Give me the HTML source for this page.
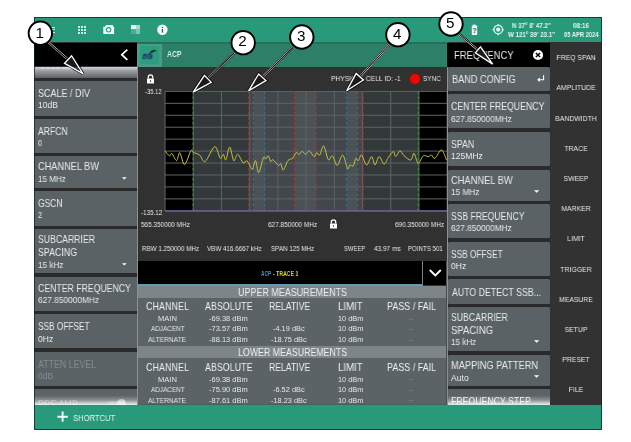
<!DOCTYPE html>
<html><head><meta charset="utf-8">
<style>
*{box-sizing:border-box;margin:0;padding:0}
html,body{width:631px;height:442px;overflow:hidden;background:#fff}
body{position:relative;font-family:"Liberation Sans",sans-serif;color:#e8eaea}
.a{position:absolute}
.t{position:absolute;white-space:nowrap;line-height:1;will-change:transform}
</style></head><body>
<div class="a" style="left:34.00px;top:17.00px;width:568.00px;height:412.50px;background:#313131;"></div>
<div class="a" style="left:34.00px;top:17.00px;width:568.00px;height:25.30px;background:#29997c;"></div>
<div class="a" style="left:34.00px;top:42.50px;width:103.00px;height:24.50px;background:#000;"></div>
<div class="a" style="left:34.00px;top:67.00px;width:103.00px;height:338.00px;background:#2a2a2a;"></div>
<div class="a" style="left:34.00px;top:67.00px;width:103.00px;height:10.50px;background:linear-gradient(#d3d5d6,#9a9ea0 35%,#5b6266);"></div>
<div class="a" style="left:34.00px;top:80.80px;width:103.00px;height:34.90px;background:#5b6266;"></div>
<div class="a" style="left:34.00px;top:119.40px;width:103.00px;height:33.70px;background:#5b6266;"></div>
<div class="a" style="left:34.00px;top:156.20px;width:103.00px;height:31.70px;background:#5b6266;"></div>
<div class="a" style="left:34.00px;top:191.00px;width:103.00px;height:34.50px;background:#5b6266;"></div>
<div class="a" style="left:34.00px;top:228.70px;width:103.00px;height:44.30px;background:#5b6266;"></div>
<div class="a" style="left:34.00px;top:276.50px;width:103.00px;height:34.60px;background:#5b6266;"></div>
<div class="a" style="left:34.00px;top:314.20px;width:103.00px;height:34.20px;background:#5b6266;"></div>
<div class="a" style="left:34.00px;top:351.80px;width:103.00px;height:34.40px;background:#5b6266;"></div>
<div class="a" style="left:34.00px;top:389.20px;width:103.00px;height:15.80px;background:linear-gradient(#5b6266,#5e6569 42%,#8d9194 70%,#f2f2f2);"></div>
<div class="a" style="left:137.00px;top:67.00px;width:1.20px;height:338.00px;background:#8c9194;"></div>
<div class="t" style="left:38.00px;top:89.11px;font-size:10.29px;color:#e8eaea;transform:scaleX(0.876);transform-origin:0 0;font-weight:normal;">SCALE / DIV</div>
<div class="t" style="left:38.00px;top:101.13px;font-size:8.55px;color:#e8eaea;transform:scaleX(0.992);transform-origin:0 0;font-weight:normal;">10dB</div>
<div class="t" style="left:38.00px;top:126.61px;font-size:10.29px;color:#e8eaea;transform:scaleX(0.838);transform-origin:0 0;font-weight:normal;">ARFCN</div>
<div class="t" style="left:38.00px;top:138.63px;font-size:8.55px;color:#e8eaea;transform:scaleX(0.864);transform-origin:0 0;font-weight:normal;">0</div>
<div class="t" style="left:38.00px;top:162.01px;font-size:10.29px;color:#e8eaea;transform:scaleX(0.894);transform-origin:0 0;font-weight:normal;">CHANNEL BW</div>
<div class="t" style="left:38.00px;top:174.83px;font-size:8.55px;color:#e8eaea;transform:scaleX(0.940);transform-origin:0 0;font-weight:normal;">15 MHz</div>
<svg class="a" style="left:121.8px;top:177.00px" width="6" height="4" viewBox="0 0 6 4"><path d="M0 0.3H4.6L2.3 2.6Z" fill="#fff"/></svg>
<div class="t" style="left:38.00px;top:199.11px;font-size:10.29px;color:#e8eaea;transform:scaleX(0.824);transform-origin:0 0;font-weight:normal;">GSCN</div>
<div class="t" style="left:38.00px;top:211.13px;font-size:8.55px;color:#e8eaea;transform:scaleX(0.864);transform-origin:0 0;font-weight:normal;">2</div>
<div class="t" style="left:38.00px;top:234.81px;font-size:10.29px;color:#e8eaea;transform:scaleX(0.845);transform-origin:0 0;font-weight:normal;">SUBCARRIER</div>
<div class="t" style="left:38.00px;top:247.51px;font-size:10.29px;color:#e8eaea;transform:scaleX(0.859);transform-origin:0 0;font-weight:normal;">SPACING</div>
<div class="t" style="left:38.00px;top:260.63px;font-size:8.55px;color:#e8eaea;transform:scaleX(0.951);transform-origin:0 0;font-weight:normal;">15 kHz</div>
<svg class="a" style="left:121.8px;top:262.80px" width="6" height="4" viewBox="0 0 6 4"><path d="M0 0.3H4.6L2.3 2.6Z" fill="#fff"/></svg>
<div class="t" style="left:38.00px;top:284.41px;font-size:10.29px;color:#e8eaea;transform:scaleX(0.847);transform-origin:0 0;font-weight:normal;">CENTER FREQUENCY</div>
<div class="t" style="left:38.00px;top:296.43px;font-size:8.55px;color:#e8eaea;transform:scaleX(0.972);transform-origin:0 0;font-weight:normal;">627.850000MHz</div>
<div class="t" style="left:38.00px;top:321.61px;font-size:10.29px;color:#e8eaea;transform:scaleX(0.806);transform-origin:0 0;font-weight:normal;">SSB OFFSET</div>
<div class="t" style="left:38.00px;top:334.53px;font-size:8.55px;color:#e8eaea;transform:scaleX(0.986);transform-origin:0 0;font-weight:normal;">0Hz</div>
<div class="t" style="left:38.00px;top:359.51px;font-size:10.29px;color:#858b8e;transform:scaleX(0.858);transform-origin:0 0;font-weight:normal;">ATTEN LEVEL</div>
<div class="t" style="left:38.00px;top:372.23px;font-size:8.55px;color:#858b8e;transform:scaleX(1.005);transform-origin:0 0;font-weight:normal;">0dB</div>
<div class="a" style="left:46.00px;top:26.60px;width:9.00px;height:1.30px;background:#c9f2e4;"></div>
<div class="a" style="left:46.00px;top:29.20px;width:9.00px;height:1.30px;background:#c9f2e4;"></div>
<div class="a" style="left:46.00px;top:31.80px;width:9.00px;height:1.30px;background:#c9f2e4;"></div>
<div class="a" style="left:77.60px;top:25.80px;width:2.20px;height:2.20px;background:#c9f2e4;"></div>
<div class="a" style="left:77.60px;top:28.75px;width:2.20px;height:2.20px;background:#c9f2e4;"></div>
<div class="a" style="left:77.60px;top:31.70px;width:2.20px;height:2.20px;background:#c9f2e4;"></div>
<div class="a" style="left:80.65px;top:25.80px;width:2.20px;height:2.20px;background:#c9f2e4;"></div>
<div class="a" style="left:80.65px;top:28.75px;width:2.20px;height:2.20px;background:#c9f2e4;"></div>
<div class="a" style="left:80.65px;top:31.70px;width:2.20px;height:2.20px;background:#c9f2e4;"></div>
<div class="a" style="left:83.70px;top:25.80px;width:2.20px;height:2.20px;background:#c9f2e4;"></div>
<div class="a" style="left:83.70px;top:28.75px;width:2.20px;height:2.20px;background:#c9f2e4;"></div>
<div class="a" style="left:83.70px;top:31.70px;width:2.20px;height:2.20px;background:#c9f2e4;"></div>
<svg class="a" style="left:102px;top:23px" width="14" height="13" viewBox="0 0 14 13"><path d="M4 1.9 L10.8 1.9 L11.4 3.7 L12.1 3.7 L12.1 11.1 L1.3 11.1 L1.3 3.7 L3.3 3.7 Z" fill="#f2fbf8"/><circle cx="6.6" cy="6.8" r="2.2" fill="none" stroke="#2b9a7b" stroke-width="1.1"/></svg>
<div class="a" style="left:130.90px;top:25.20px;width:4.70px;height:4.10px;background:#e8f8f2;"></div>
<div class="a" style="left:135.60px;top:25.20px;width:4.40px;height:4.10px;background:#a8dcc9;"></div>
<div class="a" style="left:130.90px;top:29.30px;width:4.70px;height:4.50px;background:#4fae90;"></div>
<div class="a" style="left:135.60px;top:29.30px;width:4.40px;height:4.50px;background:#7cc7ae;"></div>
<svg class="a" style="left:156px;top:23px" width="13" height="13" viewBox="0 0 13 13"><circle cx="6.4" cy="6.7" r="5.2" fill="#f4fcf9"/><rect x="5.8" y="6" width="1.3" height="3.6" fill="#1f5f4d"/><circle cx="6.45" cy="4.4" r="0.75" fill="#1f5f4d"/></svg>
<svg class="a" style="left:470px;top:23px" width="9" height="13" viewBox="0 0 9 13"><path d="M3.2 1.4 H5.4 V2.6 H7.2 V12.1 H1.8 V2.6 H3.2 Z" fill="#e8f8f2"/><text x="4.5" y="10.2" font-size="7.4" text-anchor="middle" fill="#1f6a55" style="font-family:Liberation Sans" font-weight="bold">?</text></svg>
<svg class="a" style="left:491px;top:23px" width="15" height="14" viewBox="0 0 15 14"><circle cx="7.2" cy="6.6" r="4.3" fill="none" stroke="#d8f6ea" stroke-width="1.3"/><circle cx="7.2" cy="6.6" r="2.1" fill="#e8f8f2"/><path d="M7.2 0.9V2.6M7.2 10.6V12.3M1.5 6.6H3.2M11.2 6.6H12.9" stroke="#d8f6ea" stroke-width="1.2"/></svg>
<div class="t" style="left:511.70px;top:21.64px;font-size:7.25px;color:#e6f5ef;transform:scaleX(0.853);transform-origin:0 0;font-weight:bold;">N 37° 8' 47.2"</div>
<div class="t" style="left:507.50px;top:30.90px;font-size:7.54px;color:#e6f5ef;transform:scaleX(0.821);transform-origin:0 0;font-weight:bold;">W 121° 39' 23.1"</div>
<div class="t" style="left:572.80px;top:21.64px;font-size:7.25px;color:#e6f5ef;transform:scaleX(0.862);transform-origin:0 0;font-weight:bold;">08:16</div>
<div class="t" style="left:563.80px;top:30.90px;font-size:7.54px;color:#e6f5ef;transform:scaleX(0.767);transform-origin:0 0;font-weight:bold;">05 APR 2024</div>
<div class="a" style="left:34.00px;top:66.00px;width:103.00px;height:1.00px;background:#333;"></div>
<svg class="a" style="left:118px;top:46px" width="12" height="16" viewBox="0 0 12 16"><path d="M9.3 3.6 L3.8 8.7 L9.3 13.8" fill="none" stroke="#fff" stroke-width="1.8"/></svg>
<div class="a" style="left:137.00px;top:42.50px;width:310.50px;height:24.00px;background:#2e7f67;"></div>
<div class="a" style="left:137.00px;top:42.30px;width:310.50px;height:1.50px;background:#24715b;"></div>
<div class="a" style="left:137.00px;top:43.50px;width:25.00px;height:23.00px;background:#479d86;"></div>
<div class="a" style="left:140.00px;top:45.50px;width:19.00px;height:18.50px;background:#2c9e7f;"></div>
<div class="a" style="left:137.00px;top:43.50px;width:1.20px;height:23.00px;background:#7b8f89;"></div>
<svg class="a" style="left:141px;top:47px" width="18" height="14" viewBox="0 0 18 14"><text x="1.6" y="11.5" font-size="7.4" font-style="italic" font-weight="bold" fill="#4a7f96" stroke="#1b3a66" stroke-width="0.6" style="font-family:Liberation Sans">5G</text><path d="M7.6 7.2 C8.8 4.6 11.2 2.6 13.6 2.8 C14.6 2.9 15.4 3.4 15.8 4.1 C14.8 4.2 13.8 4.6 12.6 5.2 C11 6 9.2 6.6 7.6 7.2Z" fill="#0b3f2d"/></svg>
<div class="t" style="left:166.70px;top:49.15px;font-size:9.57px;color:#d6f3e8;transform:scaleX(0.718);transform-origin:0 0;font-weight:bold;">ACP</div>
<div class="a" style="left:165.00px;top:91.40px;width:282.20px;height:119.40px;background:#33383b;"></div>
<div class="a" style="left:165.00px;top:91.40px;width:28.20px;height:119.40px;background:#000;"></div>
<div class="a" style="left:418.60px;top:91.40px;width:28.60px;height:119.40px;background:#000;"></div>
<div class="a" style="left:249.00px;top:91.40px;width:46.00px;height:119.40px;background:#41474a;"></div>
<div class="a" style="left:253.50px;top:91.40px;width:11.10px;height:119.40px;background:#4b5154;"></div>
<div class="a" style="left:295.00px;top:91.40px;width:20.90px;height:119.40px;background:#4b5154;"></div>
<div class="a" style="left:315.90px;top:91.40px;width:47.10px;height:119.40px;background:#41474a;"></div>
<div class="a" style="left:346.60px;top:91.40px;width:10.60px;height:119.40px;background:#4b5154;"></div>
<div class="a" style="left:0;top:0;width:631px;height:442px;overflow:hidden;clip-path:inset(91px 184px 230px 164px)"><svg class="a" style="left:0;top:0" width="631" height="442" viewBox="0 0 631 442"><line x1="165" y1="91.40" x2="447.2" y2="91.40" stroke="#5e6467" stroke-width="1"/><line x1="165" y1="103.34" x2="447.2" y2="103.34" stroke="#5e6467" stroke-width="1"/><line x1="165" y1="115.28" x2="447.2" y2="115.28" stroke="#5e6467" stroke-width="1"/><line x1="165" y1="127.22" x2="447.2" y2="127.22" stroke="#5e6467" stroke-width="1"/><line x1="165" y1="139.16" x2="447.2" y2="139.16" stroke="#5e6467" stroke-width="1"/><line x1="165" y1="151.10" x2="447.2" y2="151.10" stroke="#5e6467" stroke-width="1"/><line x1="165" y1="163.04" x2="447.2" y2="163.04" stroke="#5e6467" stroke-width="1"/><line x1="165" y1="174.98" x2="447.2" y2="174.98" stroke="#5e6467" stroke-width="1"/><line x1="165" y1="186.92" x2="447.2" y2="186.92" stroke="#5e6467" stroke-width="1"/><line x1="165" y1="198.86" x2="447.2" y2="198.86" stroke="#5e6467" stroke-width="1"/><line x1="165" y1="210.80" x2="447.2" y2="210.80" stroke="#5e6467" stroke-width="1"/><line x1="165.00" y1="91.4" x2="165.00" y2="210.8" stroke="#5e6467" stroke-width="1"/><line x1="193.22" y1="91.4" x2="193.22" y2="210.8" stroke="#5e6467" stroke-width="1"/><line x1="221.44" y1="91.4" x2="221.44" y2="210.8" stroke="#5e6467" stroke-width="1"/><line x1="249.66" y1="91.4" x2="249.66" y2="210.8" stroke="#5e6467" stroke-width="1"/><line x1="277.88" y1="91.4" x2="277.88" y2="210.8" stroke="#5e6467" stroke-width="1"/><line x1="306.10" y1="91.4" x2="306.10" y2="210.8" stroke="#5e6467" stroke-width="1"/><line x1="334.32" y1="91.4" x2="334.32" y2="210.8" stroke="#5e6467" stroke-width="1"/><line x1="362.54" y1="91.4" x2="362.54" y2="210.8" stroke="#5e6467" stroke-width="1"/><line x1="390.76" y1="91.4" x2="390.76" y2="210.8" stroke="#5e6467" stroke-width="1"/><line x1="418.98" y1="91.4" x2="418.98" y2="210.8" stroke="#5e6467" stroke-width="1"/><line x1="447.20" y1="91.4" x2="447.20" y2="210.8" stroke="#5e6467" stroke-width="1"/><line x1="193.2" y1="91.4" x2="193.2" y2="210.8" stroke="#3a8f3c" stroke-width="1.2" stroke-dasharray="2.6 2.5"/><line x1="418.4" y1="91.4" x2="418.4" y2="210.8" stroke="#3a8f3c" stroke-width="1.2" stroke-dasharray="2.6 2.5"/><line x1="249" y1="91.4" x2="249" y2="210.8" stroke="#9e393c" stroke-width="1.5" stroke-dasharray="2.6 2.5"/><line x1="294.8" y1="91.4" x2="294.8" y2="210.8" stroke="#9e393c" stroke-width="1.5" stroke-dasharray="2.6 2.5"/><line x1="315.8" y1="91.4" x2="315.8" y2="210.8" stroke="#9e393c" stroke-width="1.5" stroke-dasharray="2.6 2.5"/><line x1="362.9" y1="91.4" x2="362.9" y2="210.8" stroke="#9e393c" stroke-width="1.5" stroke-dasharray="2.6 2.5"/><line x1="253.5" y1="91.4" x2="253.5" y2="210.8" stroke="#3a7089" stroke-width="1.1" stroke-dasharray="2.6 2.5"/><line x1="264.6" y1="91.4" x2="264.6" y2="210.8" stroke="#3a7089" stroke-width="1.1" stroke-dasharray="2.6 2.5"/><line x1="346.6" y1="91.4" x2="346.6" y2="210.8" stroke="#3a7089" stroke-width="1.1" stroke-dasharray="2.6 2.5"/><line x1="357.2" y1="91.4" x2="357.2" y2="210.8" stroke="#3a7089" stroke-width="1.1" stroke-dasharray="2.6 2.5"/><line x1="165" y1="211" x2="447.2" y2="211" stroke="#6c5b90" stroke-width="1.6"/><path d="M164.8 150.8 C165.6 151.6 168.3 155.4 169.5 155.8 C170.7 156.2 170.7 152.7 171.9 153.5 C173.1 154.3 175.3 160.7 176.6 160.6 C177.9 160.5 178.5 152.0 179.8 152.7 C181.1 153.4 182.8 164.9 184.6 164.6 C186.4 164.3 189.4 152.8 190.9 150.8 C192.4 148.8 191.9 151.7 193.3 152.4 C194.8 153.1 197.6 153.5 199.6 155.0 C201.6 156.5 202.7 162.8 205.2 161.4 C207.7 160.0 212.2 147.2 214.7 146.7 C217.2 146.2 218.8 156.9 220.2 158.2 C221.6 159.5 222.5 154.0 223.4 154.3 C224.3 154.6 224.8 161.0 225.8 159.8 C226.9 158.6 228.4 147.0 229.7 147.1 C231.0 147.2 232.4 159.4 233.7 160.6 C235.0 161.8 236.1 153.9 237.7 154.3 C239.3 154.7 241.8 161.9 243.2 163.0 C244.6 164.1 245.3 160.3 246.4 160.6 C247.5 160.9 248.5 163.1 249.5 164.6 C250.5 166.1 251.4 170.0 252.4 169.3 C253.4 168.6 254.4 160.1 255.5 160.6 C256.6 161.1 257.4 173.0 258.7 172.5 C260.0 172.0 262.3 159.7 263.5 157.4 C264.7 155.2 265.0 159.3 265.8 159.0 C266.6 158.7 267.4 155.4 268.2 155.8 C269.0 156.2 269.8 160.7 270.6 161.4 C271.4 162.1 271.7 159.1 273.0 159.8 C274.3 160.5 277.2 164.7 278.5 165.4 C279.8 166.1 280.1 163.0 280.9 163.8 C281.7 164.6 282.1 170.6 283.3 170.1 C284.5 169.6 286.4 162.6 288.0 160.6 C289.6 158.6 291.5 159.5 292.8 158.2 C294.1 156.9 294.9 153.3 296.0 152.7 C297.1 152.0 298.1 154.5 299.1 154.3 C300.2 154.1 301.2 151.4 302.3 151.4 C303.4 151.4 304.3 154.4 305.5 154.3 C306.7 154.2 307.9 150.7 309.4 151.1 C310.8 151.5 313.0 156.3 314.2 156.6 C315.4 156.9 315.7 153.0 316.6 152.7 C317.5 152.4 318.5 156.1 319.7 155.0 C320.9 153.9 322.2 145.2 323.7 146.0 C325.1 146.8 326.9 158.2 328.4 159.8 C329.8 161.4 330.9 154.9 332.4 155.8 C333.9 156.7 335.5 165.5 337.2 165.4 C338.9 165.3 341.0 154.5 342.7 155.0 C344.4 155.5 346.3 166.8 347.5 168.5 C348.7 170.2 349.0 165.4 350.0 165.0 C351.0 164.6 352.3 166.9 353.3 165.8 C354.3 164.7 355.0 159.1 355.8 158.3 C356.6 157.5 357.3 161.4 358.3 160.8 C359.3 160.2 360.2 154.3 361.6 155.0 C363.0 155.7 364.9 164.7 366.6 165.0 C368.3 165.3 370.2 156.6 371.6 156.6 C373.0 156.6 373.8 165.0 375.0 165.0 C376.2 165.0 377.6 156.8 379.1 156.6 C380.6 156.4 382.6 163.9 384.1 164.1 C385.6 164.2 386.8 159.6 388.3 157.5 C389.8 155.4 392.1 151.8 393.3 151.6 C394.5 151.4 394.6 156.7 395.7 156.6 C396.8 156.5 398.5 150.9 399.9 150.8 C401.3 150.7 402.3 154.3 404.1 155.8 C405.9 157.3 409.1 160.4 410.7 160.0 C412.3 159.6 412.8 152.8 414.0 153.3 C415.2 153.9 416.7 162.9 418.2 163.3 C419.7 163.7 421.5 156.9 423.2 155.8 C424.9 154.7 426.8 156.7 428.2 156.6 C429.6 156.5 430.4 154.7 431.5 155.0 C432.6 155.3 433.2 159.1 434.9 158.3 C436.6 157.5 439.6 149.7 441.5 150.0 C443.4 150.3 445.7 158.3 446.5 160.0" fill="none" stroke="#ccc640" stroke-width="0.95"/></svg></div>
<svg class="a" style="left:145.5px;top:74px" width="9" height="10" viewBox="0 0 9 10"><path d="M2.3 4.6V3.1A2.2 2.2 0 0 1 6.7 3.1V4.6" fill="none" stroke="#fff" stroke-width="1.3"/><rect x="1" y="4.4" width="7" height="5.1" rx="0.5" fill="#fff"/><rect x="4" y="6.3" width="1" height="1.5" fill="#2e2e2e"/></svg>
<svg class="a" style="left:329.2px;top:218.8px" width="9" height="10" viewBox="0 0 9 10"><path d="M2.3 4.6V3.1A2.2 2.2 0 0 1 6.7 3.1V4.6" fill="none" stroke="#fff" stroke-width="1.3"/><rect x="1" y="4.4" width="7" height="5.1" rx="0.5" fill="#fff"/><rect x="4" y="6.3" width="1" height="1.5" fill="#2e2e2e"/></svg>
<div class="t" style="left:145.30px;top:87.64px;font-size:7.25px;color:#e6e8e8;transform:scaleX(0.813);transform-origin:0 0;font-weight:normal;">-35.12</div>
<div class="t" style="left:330.60px;top:75.30px;font-size:7.97px;color:#e6e8e8;transform:scaleX(0.843);transform-origin:0 0;font-weight:normal;">PHYSICAL CELL ID: -1</div>
<div class="a" style="left:410px;top:74.2px;width:9.6px;height:9.6px;border-radius:50%;background:#f00"></div>
<div class="t" style="left:422.80px;top:75.30px;font-size:7.97px;color:#e6e8e8;transform:scaleX(0.799);transform-origin:0 0;font-weight:normal;">SYNC</div>
<div class="t" style="left:141.00px;top:208.74px;font-size:7.25px;color:#e6e8e8;transform:scaleX(0.867);transform-origin:0 0;font-weight:normal;">-135.12</div>
<div class="t" style="left:141.00px;top:220.57px;font-size:7.39px;color:#e6e8e8;transform:scaleX(0.869);transform-origin:0 0;font-weight:normal;">565.350000 MHz</div>
<div class="t" style="left:268.10px;top:220.57px;font-size:7.39px;color:#e6e8e8;transform:scaleX(0.874);transform-origin:0 0;font-weight:normal;">627.850000 MHz</div>
<div class="t" style="left:394.70px;top:220.57px;font-size:7.39px;color:#e6e8e8;transform:scaleX(0.874);transform-origin:0 0;font-weight:normal;">690.350000 MHz</div>
<div class="t" style="left:141.60px;top:244.84px;font-size:7.25px;color:#e6e8e8;transform:scaleX(0.863);transform-origin:0 0;font-weight:normal;">RBW 1.250000 MHz</div>
<div class="t" style="left:206.70px;top:244.84px;font-size:7.25px;color:#e6e8e8;transform:scaleX(0.862);transform-origin:0 0;font-weight:normal;">VBW 416.6667 kHz</div>
<div class="t" style="left:270.90px;top:244.84px;font-size:7.25px;color:#e6e8e8;transform:scaleX(0.860);transform-origin:0 0;font-weight:normal;">SPAN 125 MHz</div>
<div class="t" style="left:344.00px;top:244.84px;font-size:7.25px;color:#e6e8e8;transform:scaleX(0.814);transform-origin:0 0;font-weight:normal;">SWEEP</div>
<div class="t" style="left:374.20px;top:244.84px;font-size:7.25px;color:#e6e8e8;transform:scaleX(0.892);transform-origin:0 0;font-weight:normal;">43.97 ms</div>
<div class="t" style="left:407.90px;top:244.84px;font-size:7.25px;color:#e6e8e8;transform:scaleX(0.845);transform-origin:0 0;font-weight:normal;">POINTS 501</div>
<div class="a" style="left:138.00px;top:260.50px;width:309.00px;height:24.50px;background:#000;"></div>
<div class="a" style="left:138.00px;top:283.80px;width:284.50px;height:2.10px;background:#5e9bb6;"></div>
<div class="a" style="left:422.20px;top:260.50px;width:1.00px;height:24.50px;background:#7c8183;"></div>
<svg class="a" style="left:428px;top:267px" width="15" height="12" viewBox="0 0 15 12"><path d="M1.8 3 L7.3 8.5 L12.8 3" fill="none" stroke="#fff" stroke-width="1.9"/></svg>
<div class="t" style="left:261.10px;top:269.60px;font-size:7.54px;color:#4aa6d6;transform:scaleX(0.629);transform-origin:0 0;font-weight:bold;">ACP</div>
<div class="t" style="left:272.60px;top:269.60px;font-size:7.54px;color:#d6d434;transform:scaleX(0.687);transform-origin:0 0;font-weight:bold;">- TRACE 1</div>
<div class="a" style="left:138.00px;top:285.90px;width:309.00px;height:119.10px;background:#5c6367;"></div>
<div class="a" style="left:138.00px;top:285.90px;width:309.00px;height:11.70px;background:#7d8589;"></div>
<div class="a" style="left:138.00px;top:345.60px;width:309.00px;height:12.70px;background:#7d8589;"></div>
<div class="a" style="left:446.00px;top:260.50px;width:2.00px;height:144.50px;background:#4a4d4f;"></div>
<div class="t" style="left:237.80px;top:287.74px;font-size:10.43px;color:#eef0f0;transform:scaleX(0.860);transform-origin:0 0;font-weight:normal;">UPPER MEASUREMENTS</div>
<div class="t" style="left:237.80px;top:347.84px;font-size:10.43px;color:#eef0f0;transform:scaleX(0.845);transform-origin:0 0;font-weight:normal;">LOWER MEASUREMENTS</div>
<div class="t" style="left:146.00px;top:302.04px;font-size:10.43px;color:#eef0f0;transform:scaleX(0.864);transform-origin:0 0;font-weight:normal;">CHANNEL</div>
<div class="t" style="left:204.50px;top:302.04px;font-size:10.43px;color:#eef0f0;transform:scaleX(0.853);transform-origin:0 0;font-weight:normal;">ABSOLUTE</div>
<div class="t" style="left:268.70px;top:302.04px;font-size:10.43px;color:#eef0f0;transform:scaleX(0.829);transform-origin:0 0;font-weight:normal;">RELATIVE</div>
<div class="t" style="left:337.70px;top:302.04px;font-size:10.43px;color:#eef0f0;transform:scaleX(0.926);transform-origin:0 0;font-weight:normal;">LIMIT</div>
<div class="t" style="left:386.50px;top:302.04px;font-size:10.43px;color:#eef0f0;transform:scaleX(0.860);transform-origin:0 0;font-weight:normal;">PASS / FAIL</div>
<div class="t" style="left:157.60px;top:314.87px;font-size:7.39px;color:#e4e6e6;transform:scaleX(1.028);transform-origin:0 0;font-weight:normal;">MAIN</div>
<div class="t" style="left:209.30px;top:314.87px;font-size:7.39px;color:#e4e6e6;transform:scaleX(1.015);transform-origin:0 0;font-weight:normal;">-69.38 dBm</div>
<div class="t" style="left:337.70px;top:314.87px;font-size:7.39px;color:#e4e6e6;transform:scaleX(1.001);transform-origin:0 0;font-weight:normal;">10 dBm</div>
<div class="a" style="left:408.70px;top:318.60px;width:4.20px;height:0.60px;background:#6f7679;"></div>
<div class="t" style="left:150.50px;top:325.47px;font-size:7.39px;color:#e4e6e6;transform:scaleX(0.864);transform-origin:0 0;font-weight:normal;">ADJACENT</div>
<div class="t" style="left:209.30px;top:325.47px;font-size:7.39px;color:#e4e6e6;transform:scaleX(1.015);transform-origin:0 0;font-weight:normal;">-73.57 dBm</div>
<div class="t" style="left:273.25px;top:325.47px;font-size:7.39px;color:#e4e6e6;transform:scaleX(1.002);transform-origin:0 0;font-weight:normal;">-4.19 dBc</div>
<div class="t" style="left:337.70px;top:325.47px;font-size:7.39px;color:#e4e6e6;transform:scaleX(1.001);transform-origin:0 0;font-weight:normal;">10 dBm</div>
<div class="a" style="left:408.70px;top:329.20px;width:4.20px;height:0.60px;background:#6f7679;"></div>
<div class="t" style="left:148.40px;top:336.17px;font-size:7.39px;color:#e4e6e6;transform:scaleX(0.896);transform-origin:0 0;font-weight:normal;">ALTERNATE</div>
<div class="t" style="left:209.30px;top:336.17px;font-size:7.39px;color:#e4e6e6;transform:scaleX(1.015);transform-origin:0 0;font-weight:normal;">-88.13 dBm</div>
<div class="t" style="left:271.25px;top:336.17px;font-size:7.39px;color:#e4e6e6;transform:scaleX(0.999);transform-origin:0 0;font-weight:normal;">-18.75 dBc</div>
<div class="t" style="left:337.70px;top:336.17px;font-size:7.39px;color:#e4e6e6;transform:scaleX(1.001);transform-origin:0 0;font-weight:normal;">10 dBm</div>
<div class="a" style="left:408.70px;top:339.90px;width:4.20px;height:0.60px;background:#6f7679;"></div>
<div class="t" style="left:146.00px;top:362.84px;font-size:10.43px;color:#eef0f0;transform:scaleX(0.864);transform-origin:0 0;font-weight:normal;">CHANNEL</div>
<div class="t" style="left:204.50px;top:362.84px;font-size:10.43px;color:#eef0f0;transform:scaleX(0.853);transform-origin:0 0;font-weight:normal;">ABSOLUTE</div>
<div class="t" style="left:268.70px;top:362.84px;font-size:10.43px;color:#eef0f0;transform:scaleX(0.829);transform-origin:0 0;font-weight:normal;">RELATIVE</div>
<div class="t" style="left:337.70px;top:362.84px;font-size:10.43px;color:#eef0f0;transform:scaleX(0.926);transform-origin:0 0;font-weight:normal;">LIMIT</div>
<div class="t" style="left:386.50px;top:362.84px;font-size:10.43px;color:#eef0f0;transform:scaleX(0.860);transform-origin:0 0;font-weight:normal;">PASS / FAIL</div>
<div class="t" style="left:157.60px;top:375.67px;font-size:7.39px;color:#e4e6e6;transform:scaleX(1.028);transform-origin:0 0;font-weight:normal;">MAIN</div>
<div class="t" style="left:209.30px;top:375.67px;font-size:7.39px;color:#e4e6e6;transform:scaleX(1.015);transform-origin:0 0;font-weight:normal;">-69.38 dBm</div>
<div class="t" style="left:337.70px;top:375.67px;font-size:7.39px;color:#e4e6e6;transform:scaleX(1.001);transform-origin:0 0;font-weight:normal;">10 dBm</div>
<div class="a" style="left:408.70px;top:379.40px;width:4.20px;height:0.60px;background:#6f7679;"></div>
<div class="t" style="left:150.50px;top:385.97px;font-size:7.39px;color:#e4e6e6;transform:scaleX(0.864);transform-origin:0 0;font-weight:normal;">ADJACENT</div>
<div class="t" style="left:209.30px;top:385.97px;font-size:7.39px;color:#e4e6e6;transform:scaleX(1.015);transform-origin:0 0;font-weight:normal;">-75.90 dBm</div>
<div class="t" style="left:273.25px;top:385.97px;font-size:7.39px;color:#e4e6e6;transform:scaleX(1.002);transform-origin:0 0;font-weight:normal;">-6.52 dBc</div>
<div class="t" style="left:337.70px;top:385.97px;font-size:7.39px;color:#e4e6e6;transform:scaleX(1.001);transform-origin:0 0;font-weight:normal;">10 dBm</div>
<div class="a" style="left:408.70px;top:389.70px;width:4.20px;height:0.60px;background:#6f7679;"></div>
<div class="t" style="left:148.40px;top:396.67px;font-size:7.39px;color:#e4e6e6;transform:scaleX(0.896);transform-origin:0 0;font-weight:normal;">ALTERNATE</div>
<div class="t" style="left:209.30px;top:396.67px;font-size:7.39px;color:#e4e6e6;transform:scaleX(1.015);transform-origin:0 0;font-weight:normal;">-87.61 dBm</div>
<div class="t" style="left:271.25px;top:396.67px;font-size:7.39px;color:#e4e6e6;transform:scaleX(0.999);transform-origin:0 0;font-weight:normal;">-18.23 dBc</div>
<div class="t" style="left:337.70px;top:396.67px;font-size:7.39px;color:#e4e6e6;transform:scaleX(1.001);transform-origin:0 0;font-weight:normal;">10 dBm</div>
<div class="a" style="left:408.70px;top:400.40px;width:4.20px;height:0.60px;background:#6f7679;"></div>
<div class="a" style="left:447.30px;top:42.50px;width:102.90px;height:24.30px;background:#000;"></div>
<div class="a" style="left:447.00px;top:66.80px;width:103.20px;height:338.20px;background:#2a2a2a;"></div>
<div class="a" style="left:448.20px;top:66.80px;width:102.00px;height:23.80px;background:#5b6266;border-radius:1.5px"></div>
<div class="a" style="left:448.20px;top:94.20px;width:102.00px;height:34.30px;background:#5b6266;border-radius:1.5px"></div>
<div class="a" style="left:448.20px;top:132.10px;width:102.00px;height:34.10px;background:#5b6266;border-radius:1.5px"></div>
<div class="a" style="left:448.20px;top:169.90px;width:102.00px;height:30.70px;background:#5b6266;border-radius:1.5px"></div>
<div class="a" style="left:448.20px;top:203.90px;width:102.00px;height:34.40px;background:#5b6266;border-radius:1.5px"></div>
<div class="a" style="left:448.20px;top:241.50px;width:102.00px;height:34.40px;background:#5b6266;border-radius:1.5px"></div>
<div class="a" style="left:448.20px;top:279.40px;width:102.00px;height:24.60px;background:#5b6266;border-radius:1.5px"></div>
<div class="a" style="left:448.20px;top:306.60px;width:102.00px;height:44.60px;background:#5b6266;border-radius:1.5px"></div>
<div class="a" style="left:448.20px;top:355.00px;width:102.00px;height:30.90px;background:#5b6266;border-radius:1.5px"></div>
<div class="a" style="left:448.20px;top:389.20px;width:102.00px;height:15.80px;background:linear-gradient(#5b6266,#5e6569 42%,#8d9194 70%,#f2f2f2);"></div>
<div class="a" style="left:447.00px;top:66.80px;width:1.20px;height:338.20px;background:#8c9194;"></div>
<div class="t" style="left:454.30px;top:49.80px;font-size:10.72px;color:#e8eaea;transform:scaleX(0.885);transform-origin:0 0;font-weight:normal;">FREQUENCY</div>
<svg class="a" style="left:532px;top:48.5px" width="12" height="12" viewBox="0 0 12 12"><circle cx="6" cy="6" r="5.1" fill="#fff"/><path d="M3.9 3.9L8.1 8.1M8.1 3.9L3.9 8.1" stroke="#000" stroke-width="1.4"/></svg>
<div class="t" style="left:452.30px;top:74.75px;font-size:10.00px;color:#e8eaea;transform:scaleX(0.916);transform-origin:0 0;font-weight:normal;">BAND CONFIG</div>
<svg class="a" style="left:536px;top:74px" width="10" height="10" viewBox="0 0 10 10"><path d="M7.6 1.2V5.8H2.2" fill="none" stroke="#fff" stroke-width="1.1"/><path d="M1.2 5.8L3.8 3.6V8Z" fill="#fff"/></svg>
<div class="t" style="left:450.90px;top:102.38px;font-size:10.14px;color:#e8eaea;transform:scaleX(0.865);transform-origin:0 0;font-weight:normal;">CENTER FREQUENCY</div>
<div class="t" style="left:450.90px;top:114.63px;font-size:8.55px;color:#e8eaea;transform:scaleX(0.967);transform-origin:0 0;font-weight:normal;">627.850000MHz</div>
<div class="t" style="left:450.90px;top:139.98px;font-size:10.14px;color:#e8eaea;transform:scaleX(0.867);transform-origin:0 0;font-weight:normal;">SPAN</div>
<div class="t" style="left:450.90px;top:152.03px;font-size:8.55px;color:#e8eaea;transform:scaleX(0.998);transform-origin:0 0;font-weight:normal;">125MHz</div>
<div class="t" style="left:450.90px;top:175.68px;font-size:10.14px;color:#e8eaea;transform:scaleX(0.919);transform-origin:0 0;font-weight:normal;">CHANNEL BW</div>
<div class="t" style="left:450.90px;top:188.43px;font-size:8.55px;color:#e8eaea;transform:scaleX(0.961);transform-origin:0 0;font-weight:normal;">15 MHz</div>
<svg class="a" style="left:534.2px;top:190.2px" width="6" height="4" viewBox="0 0 6 4"><path d="M0 0.3H5.2L2.6 2.8Z" fill="#fff"/></svg>
<div class="t" style="left:450.90px;top:212.28px;font-size:10.14px;color:#e8eaea;transform:scaleX(0.848);transform-origin:0 0;font-weight:normal;">SSB FREQUENCY</div>
<div class="t" style="left:450.90px;top:224.23px;font-size:8.55px;color:#e8eaea;transform:scaleX(0.967);transform-origin:0 0;font-weight:normal;">627.850000MHz</div>
<div class="t" style="left:450.90px;top:249.88px;font-size:10.14px;color:#e8eaea;transform:scaleX(0.822);transform-origin:0 0;font-weight:normal;">SSB OFFSET</div>
<div class="t" style="left:450.90px;top:262.33px;font-size:8.55px;color:#e8eaea;transform:scaleX(0.979);transform-origin:0 0;font-weight:normal;">0Hz</div>
<div class="t" style="left:452.20px;top:287.78px;font-size:10.14px;color:#e8eaea;transform:scaleX(0.867);transform-origin:0 0;font-weight:normal;">AUTO DETECT SSB...</div>
<div class="t" style="left:450.90px;top:313.18px;font-size:10.14px;color:#e8eaea;transform:scaleX(0.856);transform-origin:0 0;font-weight:normal;">SUBCARRIER</div>
<div class="t" style="left:450.90px;top:325.88px;font-size:10.14px;color:#e8eaea;transform:scaleX(0.938);transform-origin:0 0;font-weight:normal;">SPACING</div>
<div class="t" style="left:450.90px;top:338.43px;font-size:8.55px;color:#e8eaea;transform:scaleX(0.944);transform-origin:0 0;font-weight:normal;">15 kHz</div>
<svg class="a" style="left:534.2px;top:340.3px" width="6" height="4" viewBox="0 0 6 4"><path d="M0 0.3H5.2L2.6 2.8Z" fill="#fff"/></svg>
<div class="t" style="left:450.90px;top:360.78px;font-size:10.14px;color:#e8eaea;transform:scaleX(0.913);transform-origin:0 0;font-weight:normal;">MAPPING PATTERN</div>
<div class="t" style="left:450.90px;top:373.73px;font-size:8.55px;color:#e8eaea;transform:scaleX(1.007);transform-origin:0 0;font-weight:normal;">Auto</div>
<svg class="a" style="left:534.2px;top:375px" width="6" height="4" viewBox="0 0 6 4"><path d="M0 0.3H5.2L2.6 2.8Z" fill="#fff"/></svg>
<div class="a" style="left:0;top:0;width:631px;height:405px;overflow:hidden">
<div class="t" style="left:451.00px;top:396.98px;font-size:10.14px;color:#f4f4f4;transform:scaleX(0.861);transform-origin:0 0;font-weight:normal;">FREQUENCY STEP</div>
</div>
<div class="a" style="left:550.20px;top:42.50px;width:51.80px;height:362.50px;background:#323232;"></div>
<div class="t" style="left:376.00px;width:400px;text-align:center;top:54.15px;font-size:7.97px;color:#e6e8e8;transform:scaleX(0.860);transform-origin:50% 0;font-weight:normal;">FREQ SPAN</div>
<div class="t" style="left:376.00px;width:400px;text-align:center;top:84.35px;font-size:7.97px;color:#e6e8e8;transform:scaleX(0.860);transform-origin:50% 0;font-weight:normal;">AMPLITUDE</div>
<div class="t" style="left:376.00px;width:400px;text-align:center;top:114.55px;font-size:7.97px;color:#e6e8e8;transform:scaleX(0.860);transform-origin:50% 0;font-weight:normal;">BANDWIDTH</div>
<div class="t" style="left:376.00px;width:400px;text-align:center;top:144.75px;font-size:7.97px;color:#e6e8e8;transform:scaleX(0.860);transform-origin:50% 0;font-weight:normal;">TRACE</div>
<div class="t" style="left:376.00px;width:400px;text-align:center;top:174.95px;font-size:7.97px;color:#e6e8e8;transform:scaleX(0.860);transform-origin:50% 0;font-weight:normal;">SWEEP</div>
<div class="t" style="left:376.00px;width:400px;text-align:center;top:205.15px;font-size:7.97px;color:#e6e8e8;transform:scaleX(0.860);transform-origin:50% 0;font-weight:normal;">MARKER</div>
<div class="t" style="left:376.00px;width:400px;text-align:center;top:235.35px;font-size:7.97px;color:#e6e8e8;transform:scaleX(0.860);transform-origin:50% 0;font-weight:normal;">LIMIT</div>
<div class="t" style="left:376.00px;width:400px;text-align:center;top:265.55px;font-size:7.97px;color:#e6e8e8;transform:scaleX(0.860);transform-origin:50% 0;font-weight:normal;">TRIGGER</div>
<div class="t" style="left:376.00px;width:400px;text-align:center;top:295.75px;font-size:7.97px;color:#e6e8e8;transform:scaleX(0.860);transform-origin:50% 0;font-weight:normal;">MEASURE</div>
<div class="t" style="left:376.00px;width:400px;text-align:center;top:325.95px;font-size:7.97px;color:#e6e8e8;transform:scaleX(0.860);transform-origin:50% 0;font-weight:normal;">SETUP</div>
<div class="t" style="left:376.00px;width:400px;text-align:center;top:356.15px;font-size:7.97px;color:#e6e8e8;transform:scaleX(0.860);transform-origin:50% 0;font-weight:normal;">PRESET</div>
<div class="t" style="left:376.00px;width:400px;text-align:center;top:386.35px;font-size:7.97px;color:#e6e8e8;transform:scaleX(0.860);transform-origin:50% 0;font-weight:normal;">FILE</div>
<div class="a" style="left:34.00px;top:403.90px;width:103.00px;height:1.10px;background:rgba(200,238,224,0.6);"></div>
<div class="a" style="left:448.20px;top:403.90px;width:102.00px;height:1.10px;background:rgba(200,238,224,0.6);"></div>
<div class="a" style="left:138.00px;top:404.30px;width:309.00px;height:1.00px;background:rgba(60,100,88,0.7);"></div>
<div class="a" style="left:34.00px;top:405.00px;width:568.00px;height:24.50px;background:#29997c;"></div>
<div class="a" style="left:33.7px;top:16.7px;width:568.7px;height:413.1px;border:1px solid rgba(15,35,30,0.75)"></div>
<svg class="a" style="left:0;top:0" width="631" height="442" viewBox="0 0 631 442"><line x1="48.6" y1="42.6" x2="67.8" y2="59.25" stroke="#000" stroke-width="2.8"/><line x1="48.6" y1="42.6" x2="67.8" y2="59.25" stroke="#fff" stroke-width="2.0"/><line x1="48.6" y1="42.6" x2="67.8" y2="59.25" stroke="#000" stroke-width="1.1"/><polygon points="71.58,55.74 82.88,73.60 64.54,63.25" fill="#000" stroke="#000" stroke-width="2.8" stroke-linejoin="miter"/><polygon points="71.58,55.74 82.88,73.60 64.54,63.25" fill="#1a1a1a" stroke="#fff" stroke-width="1.35" stroke-linejoin="miter"/><line x1="234.5" y1="52.5" x2="207.8" y2="78.4" stroke="#000" stroke-width="2.8"/><line x1="234.5" y1="52.5" x2="207.8" y2="78.4" stroke="#fff" stroke-width="2.0"/><line x1="234.5" y1="52.5" x2="207.8" y2="78.4" stroke="#000" stroke-width="1.1"/><polygon points="204.42,75.32 193.21,92.13 211.26,82.25" fill="#000" stroke="#000" stroke-width="2.8" stroke-linejoin="miter"/><polygon points="204.42,75.32 193.21,92.13 211.26,82.25" fill="#1a1a1a" stroke="#fff" stroke-width="1.35" stroke-linejoin="miter"/><line x1="292.9" y1="47.5" x2="262.55" y2="77.05" stroke="#000" stroke-width="2.8"/><line x1="292.9" y1="47.5" x2="262.55" y2="77.05" stroke="#fff" stroke-width="2.0"/><line x1="292.9" y1="47.5" x2="262.55" y2="77.05" stroke="#000" stroke-width="1.1"/><polygon points="258.65,74.01 248.58,90.83 265.97,80.56" fill="#000" stroke="#000" stroke-width="2.8" stroke-linejoin="miter"/><polygon points="258.65,74.01 248.58,90.83 265.97,80.56" fill="#1a1a1a" stroke="#fff" stroke-width="1.35" stroke-linejoin="miter"/><line x1="389.2" y1="45" x2="360.05" y2="76.45" stroke="#000" stroke-width="2.8"/><line x1="389.2" y1="45" x2="360.05" y2="76.45" stroke="#fff" stroke-width="2.0"/><line x1="389.2" y1="45" x2="360.05" y2="76.45" stroke="#000" stroke-width="1.1"/><polygon points="356.16,73.42 346.66,90.80 363.48,79.98" fill="#000" stroke="#000" stroke-width="2.8" stroke-linejoin="miter"/><polygon points="356.16,73.42 346.66,90.80 363.48,79.98" fill="#1a1a1a" stroke="#fff" stroke-width="1.35" stroke-linejoin="miter"/><line x1="459.4" y1="34.4" x2="477.65" y2="49.65" stroke="#000" stroke-width="2.8"/><line x1="459.4" y1="34.4" x2="477.65" y2="49.65" stroke="#fff" stroke-width="2.0"/><line x1="459.4" y1="34.4" x2="477.65" y2="49.65" stroke="#000" stroke-width="1.1"/><polygon points="480.52,46.91 492.68,64.10 475.30,52.89" fill="#000" stroke="#000" stroke-width="2.8" stroke-linejoin="miter"/><polygon points="480.52,46.91 492.68,64.10 475.30,52.89" fill="#1a1a1a" stroke="#fff" stroke-width="1.35" stroke-linejoin="miter"/><circle cx="40.35" cy="33.25" r="11.7" fill="#fff" stroke="#000" stroke-width="1.9"/><text x="39.7" y="37.55" font-size="15.2" text-anchor="middle" fill="#000" style="font-family:Liberation Sans">1</text><circle cx="243.2" cy="42.7" r="11.7" fill="#fff" stroke="#000" stroke-width="1.9"/><text x="242.54999999999998" y="46.300000000000004" font-size="15.2" text-anchor="middle" fill="#000" style="font-family:Liberation Sans">2</text><circle cx="301.8" cy="37" r="11.7" fill="#fff" stroke="#000" stroke-width="1.9"/><text x="301.15000000000003" y="41.3" font-size="15.2" text-anchor="middle" fill="#000" style="font-family:Liberation Sans">3</text><circle cx="397.9" cy="34.7" r="11.7" fill="#fff" stroke="#000" stroke-width="1.9"/><text x="397.25" y="39.0" font-size="15.2" text-anchor="middle" fill="#000" style="font-family:Liberation Sans">4</text><circle cx="451" cy="24" r="11.7" fill="#fff" stroke="#000" stroke-width="1.9"/><text x="450.35" y="28.3" font-size="15.2" text-anchor="middle" fill="#000" style="font-family:Liberation Sans">5</text></svg>
<svg class="a" style="left:56px;top:410px" width="13" height="13" viewBox="0 0 13 13"><path d="M6.6 1.6V11.8M1.4 6.7H11.8" stroke="#f4fbf8" stroke-width="1.9"/></svg>
<div class="t" style="left:72.60px;top:413.55px;font-size:9.13px;color:#e0f4ec;transform:scaleX(0.835);transform-origin:0 0;font-weight:normal;">SHORTCUT</div>
<div class="a" style="left:34px;top:389.2px;width:103px;height:15.8px;overflow:hidden">
<div class="t" style="left:4px;top:11px;font-size:10.3px;color:rgba(255,255,255,0.4);transform:scaleX(0.87);transform-origin:0 0">PRE AMP</div>
<div class="a" style="left:73px;top:11.8px;width:19px;height:8px;border-radius:4px;background:rgba(255,255,255,0.22)"></div>
<div class="a" style="left:82.5px;top:10.3px;width:9.5px;height:9.5px;border-radius:50%;background:rgba(255,255,255,0.5)"></div>
</div>
<div class="a" style="left:34px;top:67px;width:103px;height:10.5px;overflow:hidden">
<div class="t" style="left:4px;top:-4.6px;font-size:8.6px;color:rgba(255,255,255,0.5);transform:scaleX(0.92);transform-origin:0 0">-35.12 dBm</div>
</div>
</body></html>
